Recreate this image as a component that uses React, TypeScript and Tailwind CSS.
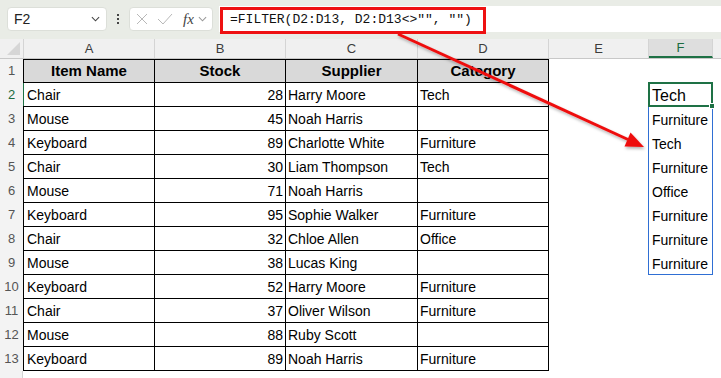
import React from "react";

// Source rows for the Item/Stock/Supplier/Category table (rows 2..13).
const ROWS: [string, number, string, string][] = [
  ["Chair", 28, "Harry Moore", "Tech"],
  ["Mouse", 45, "Noah Harris", ""],
  ["Keyboard", 89, "Charlotte White", "Furniture"],
  ["Chair", 30, "Liam Thompson", "Tech"],
  ["Mouse", 71, "Noah Harris", ""],
  ["Keyboard", 95, "Sophie Walker", "Furniture"],
  ["Chair", 32, "Chloe Allen", "Office"],
  ["Mouse", 38, "Lucas King", ""],
  ["Keyboard", 52, "Harry Moore", "Furniture"],
  ["Chair", 37, "Oliver Wilson", "Furniture"],
  ["Mouse", 88, "Ruby Scott", ""],
  ["Keyboard", 89, "Noah Harris", "Furniture"],
];

// Spilled result of =FILTER(...) in column F.
const SPILL = ["Tech", "Furniture", "Tech", "Furniture", "Office", "Furniture", "Furniture", "Furniture"];

const COLS = [
  { id: "A", w: "w-[131px]" },
  { id: "B", w: "w-[131px]" },
  { id: "C", w: "w-[132px]" },
  { id: "D", w: "w-[131px]" },
  { id: "E", w: "w-[100px]" },
  { id: "F", w: "w-[64px]" },
];

function Chevron({ className }: { className?: string }) {
  return (
    <svg viewBox="0 0 10 6" className={className} fill="none" stroke="currentColor" strokeWidth="1.2">
      <path d="M1 1l4 4 4-4" />
    </svg>
  );
}

function TopBar() {
  return (
    <div className="h-[39px] bg-[#e9ece6] flex items-start pt-[7px] pl-[7px]">
      <div className="w-[100px] h-[24px] bg-white rounded-[4px] border border-[#dcdfd9] flex items-center pl-[6px] pr-[6px] justify-between">
        <span className="text-[14px] text-[#222]">F2</span>
        <Chevron className="w-[9px] h-[6px] text-[#444]" />
      </div>
      <div className="w-[22px] h-[24px] flex flex-col items-center justify-center gap-[2px]">
        <span className="w-[2px] h-[2px] bg-[#444]" />
        <span className="w-[2px] h-[2px] bg-[#444]" />
        <span className="w-[2px] h-[2px] bg-[#444]" />
      </div>
      <div className="w-[84px] h-[24px] bg-white rounded-[4px] border border-[#dcdfd9] flex items-center pl-[6px]">
        <svg viewBox="0 0 12 12" className="w-[12px] h-[12px] text-[#b8b8b8]" fill="none" stroke="currentColor" strokeWidth="1">
          <path d="M1 1l10 10M11 1L1 11" />
        </svg>
        <svg viewBox="0 0 16 12" className="w-[16px] h-[12px] ml-[9px] text-[#b8b8b8]" fill="none" stroke="currentColor" strokeWidth="1">
          <path d="M1 6l5 5 9-10" />
        </svg>
        <span className="ml-[10px] text-[15px] italic text-[#444] leading-none" style={{ fontFamily: '"Liberation Serif", serif' }}>
          fx
        </span>
        <Chevron className="ml-[4px] w-[9px] h-[6px] text-[#999]" />
      </div>
      <div className="ml-[6px] flex-1 h-[26px] mt-[-1px] bg-white relative">
        <div className="absolute left-[1px] top-[1px] w-[266px] h-[27px] border-[3px] border-[#ee1111]" />
        <div
          className="pl-[11px] pt-[4px] text-[13px] text-[#111]"
          style={{ fontFamily: '"Liberation Mono", monospace' }}
        >
          =FILTER(D2:D13, D2:D13&lt;&gt;"", "")
        </div>
      </div>
    </div>
  );
}

function ColumnHeaders() {
  return (
    <div className="h-[20px] flex bg-[#f0f0f0] border-b border-[#c8c8c8] text-[13px] text-[#3c3c3c]">
      <div className="w-[24px] border-r border-[#d4d4d4] relative">
        <div className="absolute right-[3px] bottom-[3px] w-0 h-0 border-l-[13px] border-l-transparent border-b-[13px] border-b-[#d6d6d6]" />
      </div>
      {COLS.map((c) => (
        <div
          key={c.id}
          className={`${c.w} border-r border-[#d4d4d4] flex items-center justify-center ${
            c.id === "F" ? "bg-[#dedede] text-[#1d6b40] border-b-2 border-b-[#1e7145]" : ""
          }`}
        >
          {c.id}
        </div>
      ))}
      <div className="flex-1" />
    </div>
  );
}

function RowHead({ n, active }: { n: number; active?: boolean }) {
  return (
    <div
      className={`w-[23px] shrink-0 bg-[#f3f3f3] flex items-center justify-center text-[13px] ${
        active ? "text-[#1d6b40]" : "text-[#555]"
      }`}
    >
      {n}
    </div>
  );
}

export default function App() {
  return (
    <div
      className="relative w-[721px] h-[378px] overflow-hidden bg-white"
      style={{ fontFamily: '"Liberation Sans", Arial, sans-serif' }}
    >
      <TopBar />
      <ColumnHeaders />

      {/* header row */}
      <div className="flex h-[24px]">
        <RowHead n={1} />
        <div className="flex border-t border-b border-black bg-[#d9d9d9] text-[15px] font-bold text-black">
          <div className="w-[132px] border-l border-r border-black flex items-center justify-center">Item Name</div>
          <div className="w-[131px] border-r border-black flex items-center justify-center">Stock</div>
          <div className="w-[132px] border-r border-black flex items-center justify-center">Supplier</div>
          <div className="w-[131px] border-r border-black flex items-center justify-center">Category</div>
        </div>
        <div className="w-[100px]" />
        <div className="w-[64px]" />
      </div>

      {ROWS.map((r, i) => (
        <div key={i} className="flex h-[24px]">
          <RowHead n={i + 2} active={i === 0} />
          <div className="flex border-b border-black text-[14px] text-black">
            <div
              className={`w-[132px] border-l border-r border-black flex items-center pl-[3px] pt-[2px] ${
                i === 0 ? "border-l-[#1e7145]" : ""
              }`}
            >
              {r[0]}
            </div>
            <div className="w-[131px] border-r border-black flex items-center justify-end pr-[2px] pt-[2px]">{r[1]}</div>
            <div className="w-[132px] border-r border-black flex items-center pl-[2px] pt-[2px]">{r[2]}</div>
            <div className="w-[131px] border-r border-black flex items-center pl-[2px] pt-[2px]">{r[3]}</div>
          </div>
          <div className="w-[100px] shrink-0" />
          <div className={`w-[64px] shrink-0 flex items-center pl-[3px] pt-[2px] text-black ${i === 0 ? "text-[16px]" : "text-[14px]"}`}>
            {SPILL[i] ?? ""}
          </div>
        </div>
      ))}

      <div className="flex h-[8px]">
        <div className="w-[23px] bg-[#f3f3f3] border-r border-[#d4d4d4]" />
      </div>

      {/* spill range outline + active cell */}
      <div className="absolute left-[648px] top-[82px] w-[65px] h-[193px] border border-[#2f6fd4] pointer-events-none" />
      <div className="absolute left-[648px] top-[82px] w-[65px] h-[25px] border-2 border-[#1e7145] pointer-events-none" />
      <div className="absolute left-[709px] top-[103px] w-[6px] h-[6px] bg-[#1e7145] border border-white pointer-events-none" />

      {/* callout arrow */}
      <svg className="absolute inset-0 pointer-events-none" width="721" height="378" viewBox="0 0 721 378">
        <defs>
          <filter id="sh" x="-10%" y="-10%" width="120%" height="130%">
            <feDropShadow dx="1" dy="2" stdDeviation="1.5" floodColor="#000" floodOpacity="0.3" />
          </filter>
        </defs>
        <g filter="url(#sh)">
          <line x1="398" y1="34" x2="628" y2="139.5" stroke="#ee1111" strokeWidth="3" />
          <polygon points="644,147 624.5,146.5 630.5,132.5" fill="#ee1111" />
        </g>
      </svg>
    </div>
  );
}
